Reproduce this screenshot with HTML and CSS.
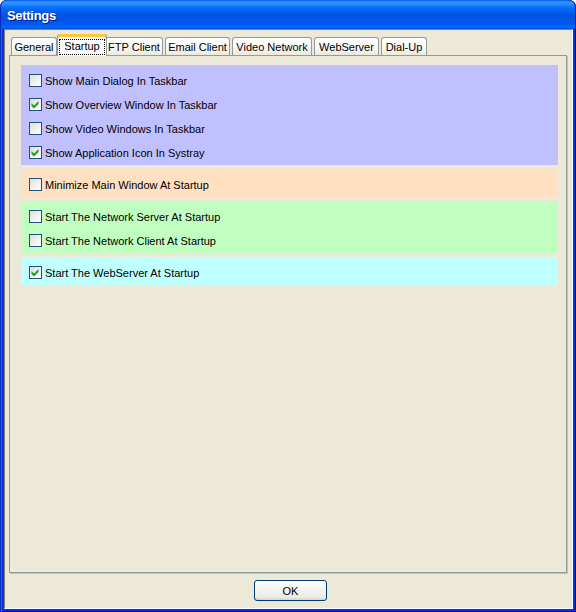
FILE: index.html
```html
<!DOCTYPE html>
<html>
<head>
<meta charset="utf-8">
<title>Settings</title>
<link rel="stylesheet" href="styles.css">
</head>
<body>
<div class="window">
  <div class="titlebar"><span class="title">Settings</span></div>
  <div class="client">
    <div class="tabstrip">
      <div class="tab t-general">General</div>
      <div class="tab t-startup selected"><span class="focus">Startup</span></div>
      <div class="tab t-ftp">FTP Client</div>
      <div class="tab t-email">Email Client</div>
      <div class="tab t-video">Video Network</div>
      <div class="tab t-web">WebServer</div>
      <div class="tab t-dial">Dial-Up</div>
    </div>
    <div class="panel">
      <div class="group blue">
        <div class="row"><span class="cb"></span><span class="label">Show Main Dialog In Taskbar</span></div>
        <div class="row"><span class="cb checked"><svg viewBox="0 0 11 11" width="11" height="11"><path d="M1.5 4 L4 6.5 L8.5 2 L8.5 5 L4 9.5 L1.5 7 Z" fill="#21A121"/></svg></span><span class="label">Show Overview Window In Taskbar</span></div>
        <div class="row"><span class="cb"></span><span class="label">Show Video Windows In Taskbar</span></div>
        <div class="row"><span class="cb checked"><svg viewBox="0 0 11 11" width="11" height="11"><path d="M1.5 4 L4 6.5 L8.5 2 L8.5 5 L4 9.5 L1.5 7 Z" fill="#21A121"/></svg></span><span class="label">Show Application Icon In Systray</span></div>
      </div>
      <div class="group orange">
        <div class="row"><span class="cb"></span><span class="label">Minimize Main Window At Startup</span></div>
      </div>
      <div class="group green">
        <div class="row"><span class="cb"></span><span class="label">Start The Network Server At Startup</span></div>
        <div class="row"><span class="cb"></span><span class="label">Start The Network Client At Startup</span></div>
      </div>
      <div class="group cyan">
        <div class="row"><span class="cb checked"><svg viewBox="0 0 11 11" width="11" height="11"><path d="M1.5 4 L4 6.5 L8.5 2 L8.5 5 L4 9.5 L1.5 7 Z" fill="#21A121"/></svg></span><span class="label">Start The WebServer At Startup</span></div>
      </div>
    </div>
    <div class="footer">
      <button class="btn">OK</button>
    </div>
  </div>
</div>
</body>
</html>
```
FILE: styles.css
```css
html, body {
  margin: 0;
  padding: 0;
  background: #ffffff;
}
body {
  font-family: "Liberation Sans", Arial, sans-serif;
  font-size: 11px;
  color: #000;
}
.window {
  width: 576px;
  height: 612px;
  display: flex;
  flex-direction: column;
  background: #0831D9;
  border-radius: 7px 7px 0 0;
  box-shadow: inset 1px 0 #0A2BB8, inset 2px 0 #166AEE, inset -1px 0 #00138C, inset 0 -1px #00138C;
  overflow: hidden;
}
.titlebar {
  height: 29px;
  flex: none;
  border-radius: 7px 7px 0 0;
  background: linear-gradient(to bottom, #0058EE 0, #3A93FF 2px, #288EFF 4px, #127DFF 6px, #036FFC 8px, #0262EE 11px, #0057E5 14px, #0054E3 18px, #0055EB 22px, #005BF5 25px, #026AFE 27px, #0062EF 28px, #0043CF 29px);
  box-shadow: inset 1px 0 #0A2BB8, inset -1px 0 #00138C;
}
.title {
  display: block;
  padding: 2px 0 0 7px;
  line-height: 28px;
  font-family: "Liberation Sans", Arial, sans-serif;
  font-weight: bold;
  font-size: 13px;
  letter-spacing: -0.3px;
  color: #ffffff;
  text-shadow: 1px 1px #0A1883;
}
.client {
  flex: 1;
  margin: 0 3px 3px 4px;
  background: #ECE9D8;
  border-top: 1px solid #7F7D74;
  border-left: 1px solid #7F7D74;
  border-right: 1px solid #ffffff;
  border-bottom: 1px solid #ffffff;
  display: flex;
  flex-direction: column;
}
.tabstrip {
  height: 25px;
  flex: none;
  display: flex;
  align-items: flex-end;
  padding-left: 6px;
  position: relative;
  z-index: 1;
}
.tab {
  box-sizing: border-box;
  height: 18px;
  margin-right: 2px;
  border: 1px solid #919B9C;
  border-bottom: none;
  border-radius: 3px 3px 0 0;
  background: linear-gradient(to bottom, #FFFFFF 0, #FBFBF9 40%, #F3F2EC 75%, #EBE8DC 100%);
  display: flex;
  align-items: center;
  justify-content: center;
  white-space: nowrap;
  padding-top: 0;
}
.t-general { width: 46px; }
.t-startup { width: 46px; }
.t-ftp { width: 58px; }
.t-email { width: 65px; }
.t-video { width: 80px; }
.t-web { width: 65px; }
.t-dial { width: 46px; }
.tab.selected {
  height: 22px;
  width: 50px;
  margin: 0 0 -1px -2px;
  padding-top: 3px;
  border-top: none;
  background: #FCFCFE;
  box-shadow: inset 0 3px #FFC83C, inset 0 1px #E68B2C;
  position: relative;
}
.tab.selected + .tab {
  margin-left: -2px;
}
.focus {
  display: block;
  box-sizing: border-box;
  width: 46px;
  height: 16px;
  line-height: 14px;
  text-align: center;
  outline: 1px dotted #000;
  outline-offset: -1px;
}
.panel {
  flex: 1;
  margin: 0 5px 0 4px;
  border: 1px solid #919B9C;
  box-shadow: 1px 1px #C5C2B2;
  background: #ECE9D8;
  padding: 9px 8px 0 11px;
  display: flex;
  flex-direction: column;
}
.group {
  padding: 3px 0 1px 8px;
  margin-bottom: 4px;
}
.blue { background: #C0C0FF; }
.orange { background: #FFE0C0; }
.green { background: #C0FFC0; }
.cyan { background: #C0FFFF; }
.row {
  height: 24px;
  display: flex;
  align-items: center;
}
.cb {
  box-sizing: border-box;
  width: 13px;
  height: 13px;
  flex: none;
  margin-right: 3px;
  border: 1px solid #1C5180;
  background: linear-gradient(135deg, #DCDCD7 0%, #F1F1EE 55%, #FFFFFF 100%);
  display: flex;
}
.cb svg {
  display: block;
}
.label {
  padding-top: 1px;
  white-space: nowrap;
}
.footer {
  height: 35px;
  flex: none;
  box-sizing: border-box;
  padding: 7px 0 0 4px;
  display: flex;
  justify-content: center;
  align-items: flex-start;
}
.btn {
  box-sizing: border-box;
  width: 73px;
  height: 21px;
  border: 1px solid #003C74;
  border-radius: 3px;
  background: linear-gradient(to bottom, #FFFFFF 0, #F6F5F1 40%, #ECEBE6 85%, #D6D0C5 100%);
  font-family: "Liberation Sans", Arial, sans-serif;
  font-size: 11px;
  color: #000;
  padding: 0;
}
```
